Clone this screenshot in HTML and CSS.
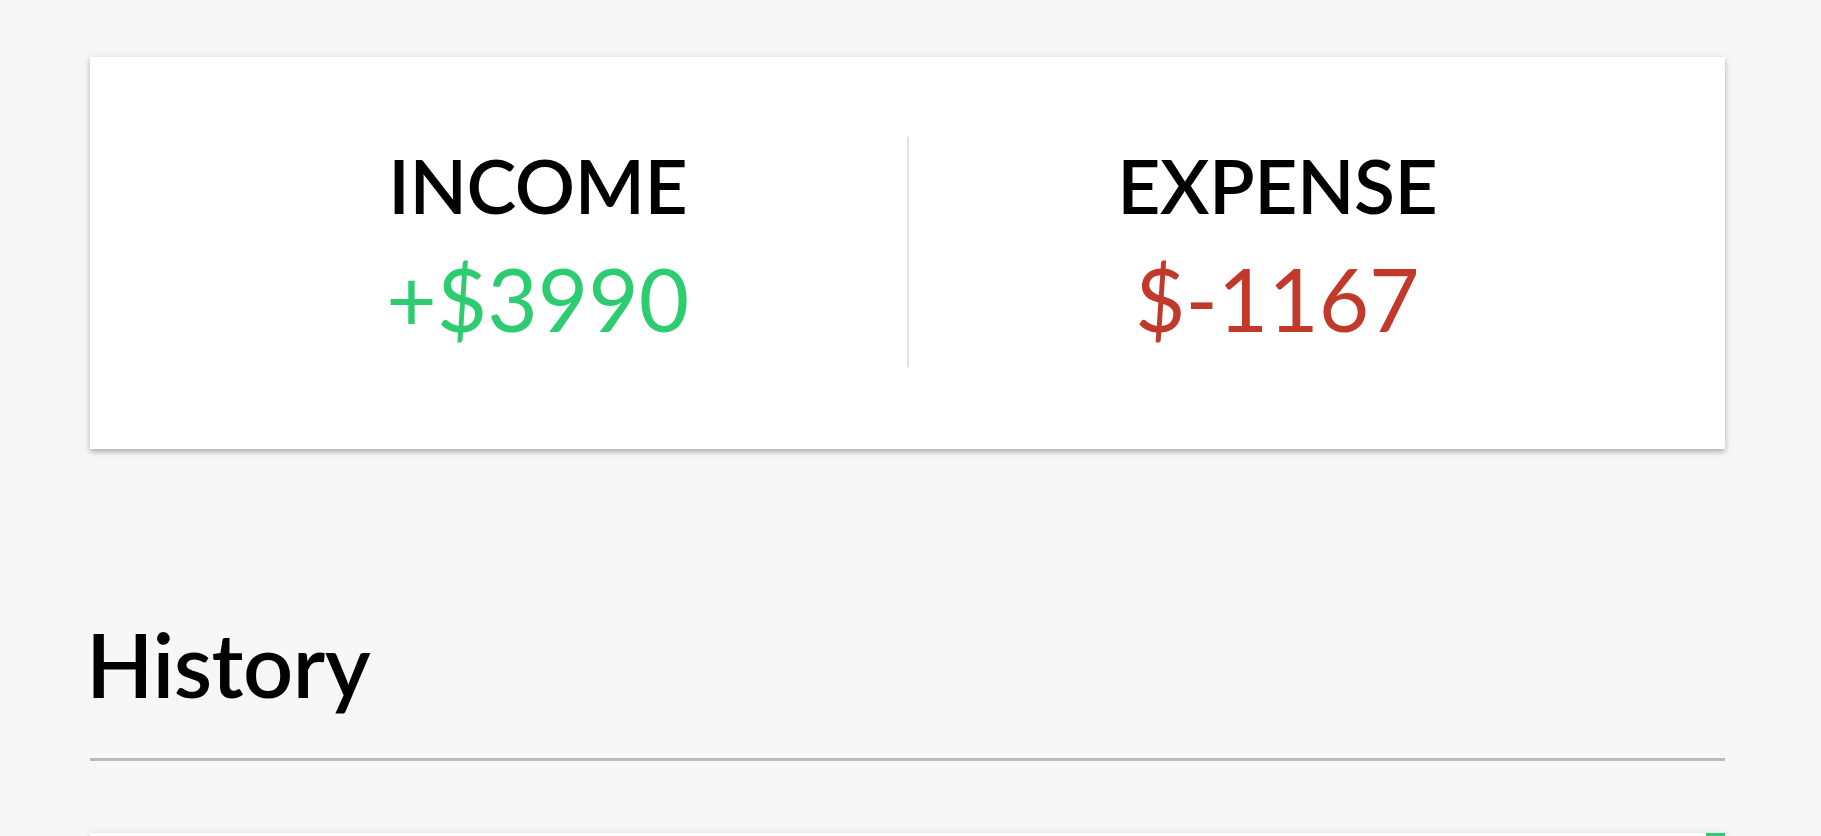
FILE: index.html
```html
<!DOCTYPE html>
<html lang="en">
<head>
<meta charset="utf-8">
<title>Expense Tracker</title>
<link rel="stylesheet" href="styles.css">
</head>
<body>
<main class="container">
  <section class="inc-exp">
    <div class="col col-income">
      <h4 class="label">Income</h4>
      <p class="money plus">+$3990</p>
    </div>
    <div class="col col-expense">
      <h4 class="label">Expense</h4>
      <p class="money minus">$-1167</p>
    </div>
  </section>
  <h3 class="history-title">History</h3>
  <ul class="list">
    <li class="item item-plus"></li>
  </ul>
</main>
</body>
</html>
```

FILE: styles.css
```css
html, body {
  margin: 0;
  padding: 0;
  height: 836px;
  overflow: hidden;
}

body {
  background: #f7f7f7;
  font-family: Lato, "Open Sans", sans-serif;
  color: #000;
}

.container {
  width: 1635px;
  margin-left: 90px;
  padding-top: 57px;
}

.inc-exp {
  background: #fff;
  box-shadow: 0 3px 5px rgba(0, 0, 0, 0.25), 0 1px 10px rgba(0, 0, 0, 0.08);
  display: flex;
  padding: 80px 79px 82px 79px;
}

.col {
  flex: 1;
  text-align: center;
  height: 230px;
  padding-top: 3px;
  box-sizing: border-box;
}

.col-income {
  border-right: 2px solid #e2e2e2;
}

.label {
  margin: 0;
  font-size: 75px;
  line-height: 1.2;
  font-weight: 600;
  letter-spacing: -0.5px;
  text-transform: uppercase;
}

.money {
  margin: 17px 0 0;
  font-size: 87px;
  line-height: 1.2;
  font-weight: 400;
}

.plus { color: #2ecc71; }
.minus { color: #c0392b; }

.history-title {
  margin: 163px 0 0;
  font-size: 88px;
  line-height: 1.2;
  font-weight: 600;
  letter-spacing: -0.5px;
  text-indent: -4px;
  padding-bottom: 40px;
  border-bottom: 3px solid #bbb;
}

.list {
  list-style: none;
  margin: 72px 0 0;
  padding: 0;
}

.item {
  background: #fff;
  height: 200px;
  box-shadow: 0 3px 5px rgba(0, 0, 0, 0.25), 0 1px 10px rgba(0, 0, 0, 0.08);
}

.item-plus {
  border-right: 19px solid #2ecc71;
}
```
